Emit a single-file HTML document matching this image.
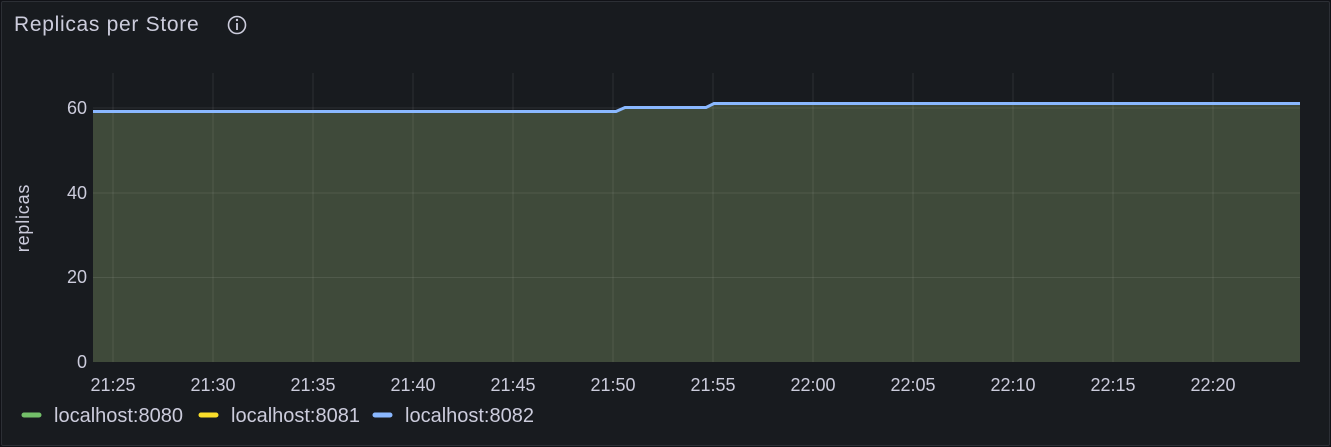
<!DOCTYPE html>
<html><head><style>
body{margin:0;width:1331px;height:447px;background:#111217;overflow:hidden;font-family:"Liberation Sans",sans-serif;}
.panel{position:absolute;left:1px;top:1px;width:1327px;height:443px;background:#181b1f;border:1px solid #2c2f35;border-radius:2px;}
.t{position:absolute;left:14px;top:13px;font-size:21px;letter-spacing:0.7px;color:#ccccdc;}
.l{font-size:18px;fill:#ccccdc;font-family:"Liberation Sans",sans-serif;}
.lg{font-size:20px;}
</style></head><body>
<div class="panel"></div>
<div class="t">Replicas per Store</div>
<svg width="1331" height="447" style="position:absolute;left:0;top:0">
<circle cx="237" cy="25" r="8.5" fill="none" stroke="#ccccdc" stroke-width="1.6"/>
<line x1="237" y1="23" x2="237" y2="30" stroke="#ccccdc" stroke-width="1.8"/>
<circle cx="237" cy="20" r="1.2" fill="#ccccdc"/>
<path d="M93 111.5 L616 111.5 L625 107.5 L706 107.5 L714 103.5 L1300 103.5 L1300 362 L93 362 Z" fill="#3f4a3a"/>
<g stroke="#ffffff" stroke-opacity="0.09" stroke-width="1">
<line x1="93" y1="108" x2="1300" y2="108"/><line x1="93" y1="193" x2="1300" y2="193"/><line x1="93" y1="277.5" x2="1300" y2="277.5"/>
<line x1="113" y1="73" x2="113" y2="362"/><line x1="213" y1="73" x2="213" y2="362"/><line x1="313" y1="73" x2="313" y2="362"/><line x1="413" y1="73" x2="413" y2="362"/><line x1="513" y1="73" x2="513" y2="362"/><line x1="613" y1="73" x2="613" y2="362"/><line x1="713" y1="73" x2="713" y2="362"/><line x1="813" y1="73" x2="813" y2="362"/><line x1="913" y1="73" x2="913" y2="362"/><line x1="1013" y1="73" x2="1013" y2="362"/><line x1="1113" y1="73" x2="1113" y2="362"/><line x1="1213" y1="73" x2="1213" y2="362"/>
</g>
<path d="M93 111.5 L616 111.5 L625 107.5 L706 107.5 L714 103.5 L1300 103.5" fill="none" stroke="#8ab8ff" stroke-width="3"/>
<g class="l" text-anchor="end"><text x="87" y="114">60</text><text x="87" y="199">40</text><text x="87" y="283">20</text><text x="87" y="368">0</text></g>
<text class="l" transform="translate(29,218) rotate(-90)" text-anchor="middle" style="font-size:18px;letter-spacing:0.8px">replicas</text>
<g class="l" text-anchor="middle"><text x="113" y="391">21:25</text><text x="213" y="391">21:30</text><text x="313" y="391">21:35</text><text x="413" y="391">21:40</text><text x="513" y="391">21:45</text><text x="613" y="391">21:50</text><text x="713" y="391">21:55</text><text x="813" y="391">22:00</text><text x="913" y="391">22:05</text><text x="1013" y="391">22:10</text><text x="1113" y="391">22:15</text><text x="1213" y="391">22:20</text></g>
<line x1="24" y1="415" x2="39" y2="415" stroke="#73bf69" stroke-width="5" stroke-linecap="round"/>
<text class="l lg" x="54" y="422">localhost:8080</text>
<line x1="201" y1="415" x2="216" y2="415" stroke="#fade2a" stroke-width="5" stroke-linecap="round"/>
<text class="l lg" x="231" y="422">localhost:8081</text>
<line x1="375" y1="415" x2="390" y2="415" stroke="#8ab8ff" stroke-width="5" stroke-linecap="round"/>
<text class="l lg" x="405" y="422">localhost:8082</text>
</svg>
</body></html>
